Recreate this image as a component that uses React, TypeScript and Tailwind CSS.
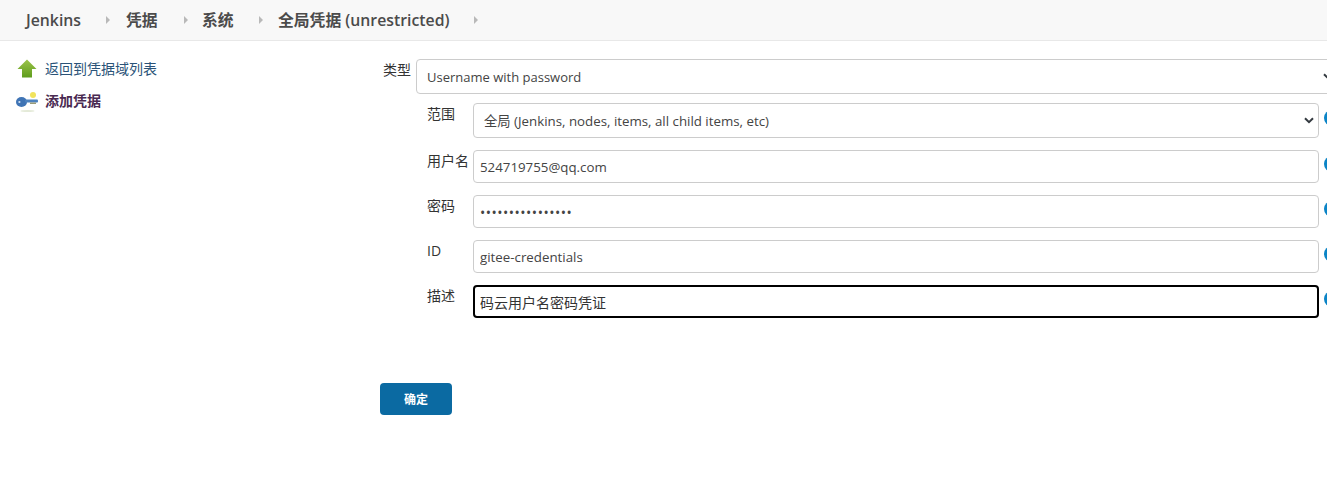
import React from 'react';

const font = { cjk: 'font-["Open_Sans","Noto_Sans_CJK_SC",sans-serif]' };

const Crumb: React.FC<{ label: string; width: string }> = ({ label, width }) => (
    <div className={`flex items-center pt-[1px] ${width}`}>
        <span className="text-[15.8px] font-semibold text-[#4b4b4b] leading-none whitespace-nowrap">{label}</span>
    </div>
);

const Sep: React.FC = () => (
    <svg width="6" height="8" viewBox="0 0 6 8" className="flex-shrink-0">
        <path d="M1 0 L5 4 L1 8 Z" fill="#b9b9b9" />
    </svg>
);

const Chevron: React.FC = () => (
    <svg width="10" height="7" viewBox="0 0 10 7" className="flex-shrink-0">
        <path d="M1 1.2 L5 5.2 L9 1.2" fill="none" stroke="#343a40" strokeWidth="2" />
    </svg>
);

const HelpDot: React.FC = () => (
    <div className="w-[16px] h-[16px] ml-[5px] mb-[5px] flex-shrink-0 rounded-full bg-[#0b84c6]" />
);

const Row: React.FC<{ label: string; mt: string; children: React.ReactNode }> = ({ label, mt, children }) => (
    <div className={`flex items-start pl-[47px] ${mt}`}>
        <label className="w-[46px] flex-shrink-0 text-[14px] leading-[18px] pt-[2px] text-[#333]">{label}</label>
        {children}
        <div className="self-center">
            <HelpDot />
        </div>
    </div>
);

const inputCls =
    'w-[846px] flex-shrink-0 h-[33px] px-[6px] text-[13.3px] text-[#444] bg-white border border-[#ccc] rounded-[4px] outline-none';

const App: React.FC = () => {
    return (
        <div className={`w-[1327px] h-[489px] overflow-hidden bg-white ${font.cjk}`}>
            <header className="h-[41px] flex items-center pl-[26px] bg-[#f8f8f8] border-b border-[#e8e8e8]">
                <Crumb label="Jenkins" width="w-[79px]" />
                <Sep />
                <div className="w-[15px]" />
                <Crumb label="凭据" width="w-[57px]" />
                <Sep />
                <div className="w-[13px]" />
                <Crumb label="系统" width="w-[56px]" />
                <Sep />
                <div className="w-[14px]" />
                <Crumb label="全局凭据 (unrestricted)" width="w-[195px]" />
                <Sep />
            </header>

            <div className="flex">
                <aside className="w-[380px] flex-shrink-0 pl-[16px] pt-[17px] text-[14px]">
                    <div className="flex items-center h-[22px]">
                        <svg width="22" height="22" viewBox="0 0 22 22" className="flex-shrink-0">
                            <defs>
                                <linearGradient id="up" x1="0" y1="0" x2="0" y2="1">
                                    <stop offset="0" stopColor="#9cc44a" />
                                    <stop offset="1" stopColor="#5e9c1c" />
                                </linearGradient>
                            </defs>
                            <path d="M11 1.5 L20.5 11 H16 V19.5 H6 V11 H1.5 Z" fill="url(#up)" />
                        </svg>
                        <a className="ml-[7px] pb-[2px] text-[#2a5378] whitespace-nowrap">返回到凭据域列表</a>
                    </div>
                    <div className="flex items-center h-[22px] mt-[10px]">
                        <svg width="22" height="22" viewBox="0 0 22 22" className="flex-shrink-0">
                            <circle cx="17" cy="5" r="3" fill="#f1e35c" />
                            <ellipse cx="11.5" cy="21" rx="7" ry="1" fill="#e4ead8" />
                            <ellipse cx="5.5" cy="12" rx="5.5" ry="5" fill="#3f74b5" />
                            <rect x="9" y="9.5" width="13" height="3" rx="1" fill="#4d82bf" />
                            <rect x="14" y="12.5" width="6" height="1.5" fill="#9a9c7a" />
                            <circle cx="3.4" cy="12" r="1.1" fill="#cfe0f2" />
                        </svg>
                        <a className="ml-[7px] pb-[2px] font-semibold text-[#4a2a52] whitespace-nowrap">添加凭据</a>
                    </div>
                </aside>

                <main className="flex-1 min-w-0 pt-[18px]">
                    <div className="flex items-start pl-[3px]">
                        <label className="w-[33px] flex-shrink-0 text-[14px] leading-[18px] pt-[2px] text-[#333] whitespace-nowrap">类型</label>
                        <div className="w-[928px] flex-shrink-0 h-[35px] flex items-center justify-between pl-[10px] pr-[10px] bg-white border border-[#ccc] rounded-[4px] text-[13px] text-[#444]">
                            <span className="pt-[2px]">Username with password</span>
                            <Chevron />
                        </div>
                    </div>

                    <Row label="范围" mt="mt-[9px]">
                        <div className="w-[846px] flex-shrink-0 h-[35px] flex items-center justify-between pl-[10px] pr-[4px] bg-white border border-[#ccc] rounded-[4px] text-[13.3px] text-[#444]">
                            <span className="pt-[2px]">全局 (Jenkins, nodes, items, all child items, etc)</span>
                            <Chevron />
                        </div>
                    </Row>
                    <Row label="用户名" mt="mt-[12px]">
                        <input readOnly value="524719755@qq.com" className={inputCls} />
                    </Row>
                    <Row label="密码" mt="mt-[12px]">
                        <input
                            readOnly
                            type="password"
                            value="1234567890123456"
                            className="w-[846px] flex-shrink-0 h-[33px] px-[6px] pt-[2px] text-[14px] tracking-[0.5px] text-[#444] bg-white border border-[#ccc] rounded-[4px] outline-none"
                        />
                    </Row>
                    <Row label="ID" mt="mt-[12px]">
                        <input readOnly value="gitee-credentials" className={inputCls} />
                    </Row>
                    <Row label="描述" mt="mt-[12px]">
                        <input
                            readOnly
                            value="码云用户名密码凭证"
                            className="w-[846px] flex-shrink-0 h-[33px] px-[5px] text-[14px] text-[#333] bg-white border-2 border-black rounded-[4px] outline-none"
                        />
                    </Row>

                    <button className="mt-[65px] w-[72px] h-[32px] pt-[2px] rounded-[4px] bg-[#0b6aa2] text-white text-[12px] font-bold">
                        确定
                    </button>
                </main>
            </div>
        </div>
    );
};

export default App;
